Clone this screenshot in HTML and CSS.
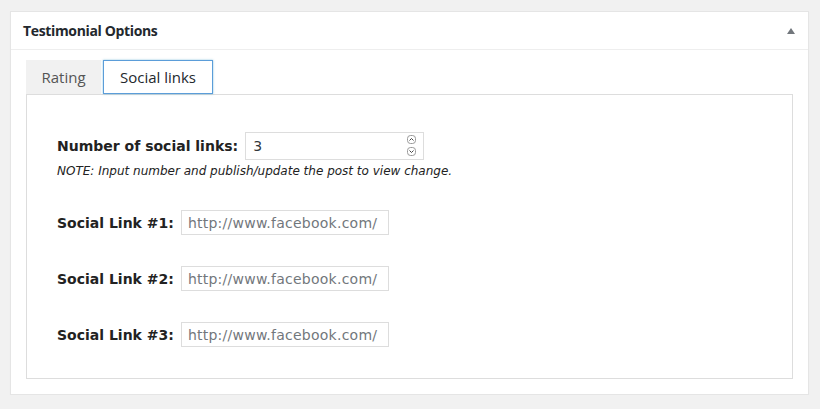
FILE: index.html
```html
<!DOCTYPE html>
<html>
<head>
<meta charset="utf-8">
<link rel="stylesheet" href="styles.css">
</head>
<body>
<div class="postbox">
  <div class="hndle">
    <h2 class="title">Testimonial Options</h2>
    <span class="toggle"></span>
  </div>
  <div class="inside">
    <div class="tabs">
      <div class="tab">Rating</div>
      <div class="tab active">Social links</div>
    </div>
    <div class="panel">
      <div class="field-row">
        <label class="lbl">Number of social links:</label>
        <div class="num-input">
          <span class="num-val">3</span>
          <span class="spin">
            <span class="spin-btn"><svg width="9" height="9" viewBox="0 0 9 9"><rect x="0.5" y="0.5" width="8" height="8" rx="3" fill="#fff" stroke="#999"/><path d="M2.5 5.5 L4.5 3.5 L6.5 5.5" fill="none" stroke="#444"/></svg></span>
            <span class="spin-btn"><svg width="9" height="9" viewBox="0 0 9 9"><rect x="0.5" y="0.5" width="8" height="8" rx="3" fill="#fff" stroke="#999"/><path d="M2.5 3.5 L4.5 5.5 L6.5 3.5" fill="none" stroke="#444"/></svg></span>
          </span>
        </div>
      </div>
      <p class="note">NOTE: Input number and publish/update the post to view change.</p>
      <div class="link-row">
        <label class="lbl">Social Link #1:</label>
        <div class="text-input">http://www.facebook.com/</div>
      </div>
      <div class="link-row">
        <label class="lbl">Social Link #2:</label>
        <div class="text-input">http://www.facebook.com/</div>
      </div>
      <div class="link-row">
        <label class="lbl">Social Link #3:</label>
        <div class="text-input">http://www.facebook.com/</div>
      </div>
    </div>
  </div>
</div>
</body>
</html>
```
FILE: styles.css
```css
html, body {
  margin: 0;
  padding: 0;
  background: #f1f1f1;
}
body {
  padding: 11px 11px 0 10px;
  font-family: "DejaVu Sans", sans-serif;
  color: #23282d;
}
.postbox {
  width: 799px;
  background: #fff;
  border: 1px solid #e5e5e5;
  box-shadow: 0 1px 1px rgba(0,0,0,0.04);
  box-sizing: border-box;
}
.hndle {
  height: 37px;
  border-bottom: 1px solid #eee;
  display: flex;
  align-items: center;
  justify-content: space-between;
  padding: 0 12px 0 12px;
}
.title {
  margin: 0;
  font-family: "Open Sans", sans-serif;
  font-weight: 700;
  font-size: 14px;
  color: #23282d;
  letter-spacing: -0.35px;
}
.toggle {
  width: 0;
  height: 0;
  border-left: 4px solid transparent;
  border-right: 4px solid transparent;
  border-bottom: 6px solid #72777c;
  margin-right: 1px;
}
.inside {
  padding: 10px 15px 15px 15px;
}
.tabs {
  display: flex;
  gap: 2px;
  height: 34px;
}
.tab {
  font-family: "Open Sans", sans-serif;
  font-size: 15px;
  color: #555;
  background: #f1f1f1;
  width: 75px;
  box-sizing: border-box;
  display: flex;
  align-items: center;
  justify-content: center;
}
.tab.active {
  width: 110px;
  background: #fff;
  color: #23282d;
  border: 1px solid #5b9dd9;
  box-shadow: 0 0 2px rgba(30,140,190,0.5);
  position: relative;
  z-index: 1;
}
.panel {
  border: 1px solid #ddd;
  height: 285px;
  box-sizing: border-box;
  padding: 37px 30px 0 30px;
}
.lbl {
  font-family: "DejaVu Sans", sans-serif;
  font-weight: 700;
  font-size: 14px;
  color: #222;
}
.field-row {
  display: flex;
  align-items: center;
  gap: 7px;
  height: 28px;
}
.num-input {
  width: 179px;
  height: 28px;
  box-sizing: border-box;
  border: 1px solid #ddd;
  display: flex;
  align-items: center;
  justify-content: space-between;
  padding: 0 7px 0 7px;
  font-size: 14px;
  color: #32373c;
}
.spin {
  display: flex;
  flex-direction: column;
  gap: 2px;
}
.spin-btn {
  display: block;
  height: 10px;
  line-height: 0;
}
.note {
  margin: 4px 0 0 0;
  font-style: italic;
  font-size: 12px;
  color: #222;
}
.link-row {
  display: flex;
  align-items: center;
  gap: 7px;
  margin-top: 32px;
}
.link-row + .link-row {
  margin-top: 31px;
}
.text-input {
  width: 208px;
  height: 25px;
  box-sizing: border-box;
  border: 1px solid #ddd;
  padding: 0 6px;
  display: flex;
  align-items: center;
  font-size: 14px;
  letter-spacing: 0.25px;
  color: #72777c;
}
```
